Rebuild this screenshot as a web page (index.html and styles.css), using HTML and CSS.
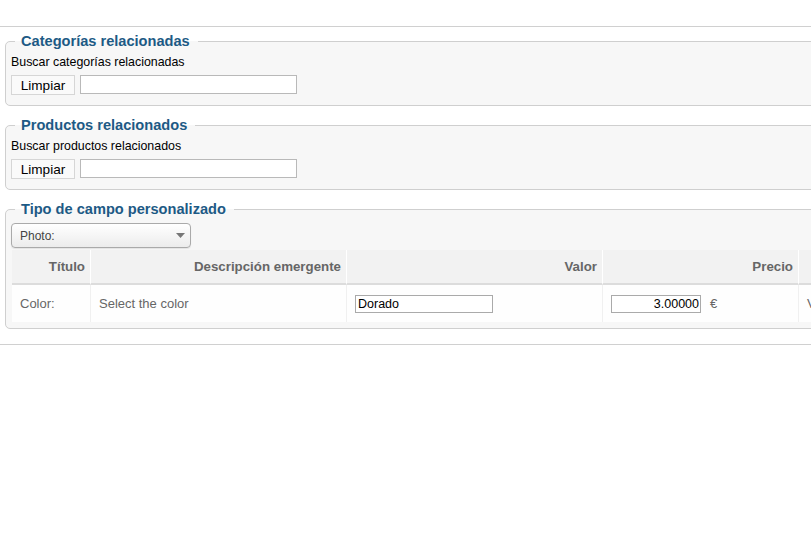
FILE: index.html
```html
<!DOCTYPE html>
<html lang="es">
<head>
    <meta charset="UTF-8">
    <meta name="viewport" content="width=device-width, initial-scale=1.0">
    <title>Producto - relaciones</title>
    <link rel="stylesheet" href="styles.css">
</head>
<body>
    <div class="panel">
        <fieldset class="box">
            <legend>Categorías relacionadas</legend>
            <label class="search-label" for="cat_search">Buscar categorías relacionadas</label>
            <div class="search-row">
                <button type="button" class="btn">Limpiar</button>
                <input type="text" id="cat_search" class="search-input">
            </div>
        </fieldset>

        <fieldset class="box">
            <legend>Productos relacionados</legend>
            <label class="search-label" for="prod_search">Buscar productos relacionados</label>
            <div class="search-row">
                <button type="button" class="btn">Limpiar</button>
                <input type="text" id="prod_search" class="search-input">
            </div>
        </fieldset>

        <fieldset class="box box-table">
            <legend>Tipo de campo personalizado</legend>
            <div class="select">
                <span>Photo:</span>
                <svg width="9" height="5" viewBox="0 0 9 5"><path d="M0 0h9L4.5 5z" fill="#777"/></svg>
            </div>
            <table class="fields">
                <thead>
                    <tr>
                        <th class="c-title">Título</th>
                        <th class="c-desc">Descripción emergente</th>
                        <th class="c-value">Valor</th>
                        <th class="c-price">Precio</th>
                        <th class="c-more"></th>
                    </tr>
                </thead>
                <tbody>
                    <tr>
                        <td>Color:</td>
                        <td>Select the color</td>
                        <td><input type="text" class="value-input" value="Dorado"></td>
                        <td><input type="text" class="price-input" value="3.00000"><span class="currency">€</span></td>
                        <td>Variante</td>
                    </tr>
                </tbody>
            </table>
        </fieldset>
    </div>
</body>
</html>
```

FILE: styles.css
```css
html, body {
    overflow: hidden;
}
body {
    font-family: "Liberation Sans", Arial, sans-serif;
    font-size: 12px;
    margin: 0;
    padding: 0;
    background-color: #FFF;
    color: #000;
}
.panel {
    width: 1100px;
    margin-top: 26px;
    padding: 5px 0;
    border-top: 1px solid #d0d0d0;
    border-bottom: 1px solid #d0d0d0;
}
.box {
    margin: 0 0 10px 5px;
    padding: 5px 5px 10px 5px;
    border: 1px solid #cfcfcf;
    border-radius: 5px;
    background-color: #f7f7f7;
    min-width: 0;
}
.box-table {
    padding-bottom: 6px;
}
.box legend {
    margin-left: 4px;
    padding: 0 8px 0 6px;
    font-size: 14.6px;
    font-weight: bold;
    line-height: 18px;
    color: #1d5a85;
}
.search-label {
    display: block;
    font-size: 12.4px;
    line-height: 14px;
}
.search-row {
    display: flex;
    gap: 5px;
    margin-top: 6px;
}
.btn {
    height: 20px;
    width: 64px;
    padding: 0;
    font-family: "Liberation Sans", Arial, sans-serif;
    font-size: 13.6px;
    color: #000;
    background-color: #fafafa;
    border: 1px solid #d6d6d6;
    border-radius: 0;
}
.search-input {
    box-sizing: border-box;
    width: 217px;
    height: 19px;
    margin: 0;
    border: 1px solid #b9b9b9;
    background-color: #fff;
}
.select {
    box-sizing: border-box;
    display: flex;
    align-items: center;
    justify-content: space-between;
    width: 180px;
    height: 25px;
    padding: 0 5px 0 8px;
    border: 1px solid #aaa;
    border-radius: 4px;
    background: linear-gradient(#fff, #ececec);
    box-shadow: 0 1px 1px rgba(0, 0, 0, 0.08);
    color: #444;
}
.fields {
    margin: 2px 0 0 1px;
    border-collapse: separate;
    border-spacing: 0;
    color: #666;
}
.fields th {
    height: 33px;
    padding: 0 5px;
    text-align: right;
    font-size: 13.3px;
    font-weight: bold;
    background-color: #f2f2f2;
    border-right: 1px solid #fff;
    border-bottom: 2px solid #dcdcdc;
}
.fields td {
    height: 37px;
    padding: 0 8px;
    font-size: 13px;
    background-color: #fefefe;
    border-right: 1px solid #f0f0f0;
}
.c-title { width: 68px; }
.c-desc { width: 245px; }
.c-value { width: 245px; }
.c-price { width: 185px; }
.c-more { width: 200px; }
.value-input {
    box-sizing: border-box;
    width: 138px;
    height: 18px;
    margin: 0;
    padding: 0 2px;
    border: 1px solid #aaa;
    font-family: "Liberation Sans", Arial, sans-serif;
    font-size: 12.5px;
    color: #000;
}
.price-input {
    box-sizing: border-box;
    width: 90px;
    height: 18px;
    margin: 0;
    padding: 0 1px;
    border: 1px solid #aaa;
    text-align: right;
    font-family: "Liberation Sans", Arial, sans-serif;
    font-size: 12.5px;
    color: #000;
}
.currency {
    margin-left: 9px;
    color: #666;
}
```
